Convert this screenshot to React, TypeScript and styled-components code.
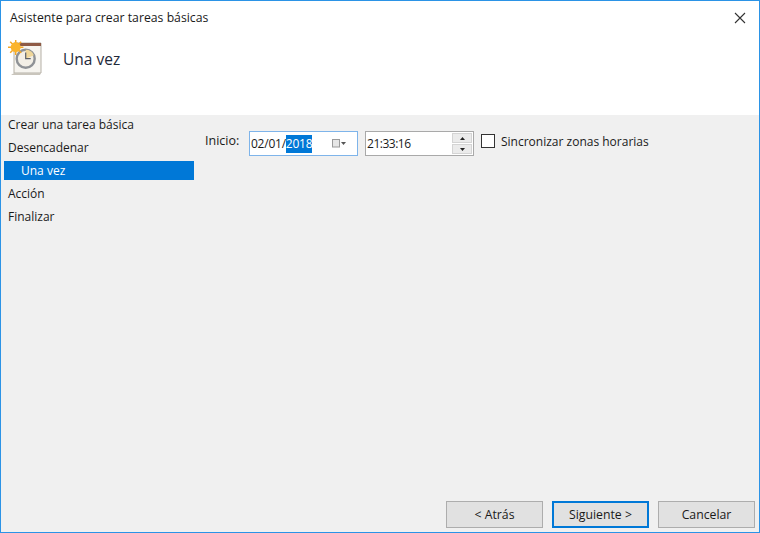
import React from "react";
import styled, { createGlobalStyle } from "styled-components";

const GlobalStyle = createGlobalStyle`
    html, body {
        margin: 0;
        padding: 0;
        width: 760px;
        height: 533px;
        overflow: hidden;
    }
    body {
        font-family: "Open Sans", "Noto Sans", sans-serif;
        font-size: 12px;
        color: #1a1a1a;
    }
`;

const Window = styled.div`
    box-sizing: border-box;
    width: 760px;
    height: 533px;
    display: flex;
    flex-direction: column;
    border: 1px solid #2b93e6;
    background: #fff;
`;

const TitleBar = styled.div`
    height: 33px;
    flex: none;
    display: flex;
    align-items: center;
    justify-content: space-between;
    padding: 0 7px 0 9px;
`;

const Title = styled.span`
    font-size: 12.25px;
`;

const CloseButton = styled.button`
    width: 24px;
    height: 24px;
    padding: 0;
    border: 0;
    background: none;
    display: flex;
    align-items: center;
    justify-content: center;
`;

const Header = styled.div`
    height: 75px;
    flex: none;
    display: flex;
    align-items: flex-start;
    padding: 6px 0 0 6px;
    gap: 20px;
`;

const HeaderTitle = styled.h1`
    margin: 7px 0 0;
    font-size: 15.5px;
    line-height: 24px;
    font-weight: 400;
    color: #1f2a3a;
`;

const Body = styled.div`
    flex: 1;
    display: flex;
    flex-direction: column;
    background: #f0f0f0;
    min-height: 0;
`;

const Content = styled.div`
    flex: 1;
    display: flex;
    min-height: 0;
`;

const Sidebar = styled.nav`
    width: 190px;
    flex: none;
    margin-left: 3px;
    display: flex;
    flex-direction: column;
    gap: 4px;
`;

const Step = styled.div<{ $active?: boolean }>`
    height: 19px;
    line-height: 19px;
    padding-left: ${(p) => (p.$active ? "17px" : "4px")};
    background: ${(p) => (p.$active ? "#0078d7" : "transparent")};
    color: ${(p) => (p.$active ? "#fff" : "#1a1a1a")};
`;

const Form = styled.div`
    flex: 1;
    display: flex;
    align-items: flex-start;
    padding: 16px 0 0 11px;
`;

const StartLabel = styled.label`
    width: 44px;
    flex: none;
    margin-top: 1px;
    font-size: 12.5px;
    line-height: 18px;
`;

const Field = styled.div<{ $focused?: boolean }>`
    box-sizing: border-box;
    height: 25px;
    display: flex;
    align-items: center;
    background: #fff;
    border: 1px solid ${(p) => (p.$focused ? "#7eb4ea" : "#a9a9a9")};
`;

const DateField = styled(Field)`
    width: 109px;
    padding-left: 1px;
`;

const TimeField = styled(Field)`
    width: 109px;
    margin-left: 7px;
    padding-left: 1px;
    justify-content: space-between;
`;

const FieldText = styled.span<{ $tight?: boolean }>`
    line-height: 18px;
    letter-spacing: ${(p) => (p.$tight ? "-0.04em" : "-0.02em")};
`;

const Selected = styled.span`
    display: inline-block;
    line-height: 18px;
    background: #0078d7;
    color: #fff;
`;

const CalendarIcon = styled.svg`
    margin-left: 20px;
    flex: none;
`;

const Spinner = styled.div`
    width: 20px;
    height: 21px;
    margin-right: 1px;
    display: flex;
    flex-direction: column;
    gap: 1px;
`;

const SpinButton = styled.div`
    flex: 1;
    display: flex;
    align-items: center;
    justify-content: center;
    background: #ebebeb;
    border: 1px solid #d4d4d4;
`;

const CheckRow = styled.label`
    display: flex;
    align-items: center;
    margin: 1px 0 0 7px;
    height: 18px;
    gap: 6px;
`;

const CheckBox = styled.span`
    box-sizing: border-box;
    width: 14px;
    height: 14px;
    background: #fff;
    border: 1px solid #333;
`;

const Footer = styled.div`
    flex: none;
    display: flex;
    justify-content: flex-end;
    gap: 9px;
    padding: 0 4px 4px 0;
`;

const Button = styled.button<{ $primary?: boolean }>`
    box-sizing: border-box;
    width: 97px;
    height: 27px;
    padding: 0;
    font: inherit;
    font-size: 12.25px;
    color: #1a1a1a;
    background: #e1e1e1;
    border: ${(p) => (p.$primary ? "2px solid #0078d7" : "1px solid #adadad")};
`;

const ClockIcon = () => (
    <svg width="36" height="36" viewBox="0 0 36 36">
        <path d="M7 3h27v30H7z" fill="#f6f4ef" stroke="#b5b0a6" />
        <path d="M7 33l-3 2h29l1-2z" fill="#c9c5bc" />
        <path d="M11 3h23v3H11z" fill="#8e5a45" />
        <circle cx="18.7" cy="18.7" r="9" fill="#f3efe6" stroke="#8f9296" strokeWidth="2.4" />
        <path d="M18.7 18.7V9.7a9 9 0 0 1 8.2 5.5z" fill="#f0d79a" />
        <path d="M18.7 12.5v6.2h5" fill="none" stroke="#5b6068" strokeWidth="1.2" />
        <g stroke="#f5a623" strokeWidth="1.5">
            <path d="M8.7 0v15M1 7.3h15.4M3.2 1.8l11 11M14.2 1.8l-11 11" />
        </g>
        <circle cx="8.7" cy="7.3" r="5" fill="#fbb42c" />
    </svg>
);

const CloseIcon = () => (
    <svg width="12" height="12" viewBox="0 0 12 12">
        <path d="M1 1l10 10M11 1L1 11" stroke="#333" strokeWidth="1.1" fill="none" />
    </svg>
);

const Arrow = ({ down }: { down?: boolean }) => (
    <svg width="5" height="3" viewBox="0 0 5 3">
        <path d={down ? "M0 0h5L2.5 3z" : "M0 3h5L2.5 0z"} fill="#222" />
    </svg>
);

const steps = [
    { label: "Crear una tarea básica" },
    { label: "Desencadenar" },
    { label: "Una vez", active: true },
    { label: "Acción" },
    { label: "Finalizar" },
];

export default function App() {
    return (
        <>
            <GlobalStyle />
            <Window>
                <TitleBar>
                    <Title>Asistente para crear tareas básicas</Title>
                    <CloseButton>
                        <CloseIcon />
                    </CloseButton>
                </TitleBar>
                <Header>
                    <ClockIcon />
                    <HeaderTitle>Una vez</HeaderTitle>
                </Header>
                <Body>
                    <Content>
                        <Sidebar>
                            {steps.map((s) => (
                                <Step key={s.label} $active={s.active}>
                                    {s.label}
                                </Step>
                            ))}
                        </Sidebar>
                        <Form>
                            <StartLabel>Inicio:</StartLabel>
                            <DateField $focused>
                                <FieldText>
                                    02/01/<Selected>2018</Selected>
                                </FieldText>
                                <CalendarIcon width="14" height="9" viewBox="0 0 14 9">
                                    <rect x="0.5" y="0.5" width="7" height="7.5" fill="#e6e6e6" stroke="#9a9a9a" />
                                    <path d="M9 3h5l-2.5 3z" fill="#555" />
                                </CalendarIcon>
                            </DateField>
                            <TimeField>
                                <FieldText $tight>21:33:16</FieldText>
                                <Spinner>
                                    <SpinButton>
                                        <Arrow />
                                    </SpinButton>
                                    <SpinButton>
                                        <Arrow down />
                                    </SpinButton>
                                </Spinner>
                            </TimeField>
                            <CheckRow>
                                <CheckBox />
                                Sincronizar zonas horarias
                            </CheckRow>
                        </Form>
                    </Content>
                    <Footer>
                        <Button>&lt; Atrás</Button>
                        <Button $primary>Siguiente &gt;</Button>
                        <Button>Cancelar</Button>
                    </Footer>
                </Body>
            </Window>
        </>
    );
}
